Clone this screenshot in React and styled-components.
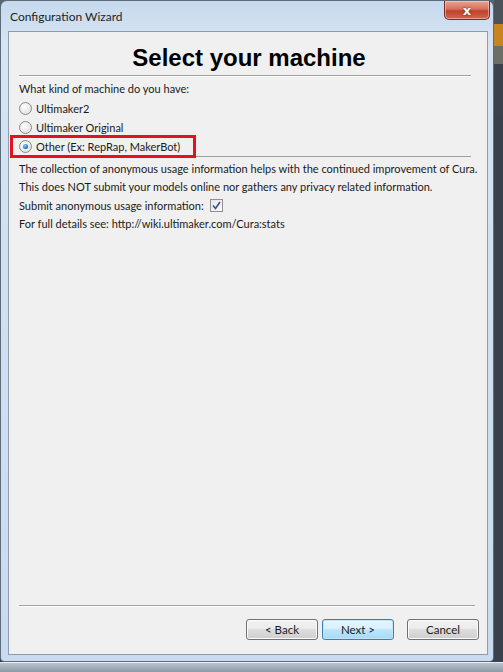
import React from 'react';
import styled, { createGlobalStyle } from 'styled-components';

const Global = createGlobalStyle`
	html, body {
		margin: 0;
		padding: 0;
		background: #3c4650;
	}
	body {
		width: 503px;
		height: 672px;
		overflow: hidden;
		font-family: Lato, 'Open Sans', sans-serif;
	}
`;

const Desktop = styled.div`
	width: 503px;
	height: 672px;
	display: flex;
	flex-direction: column;
	background: linear-gradient(to bottom, #5a6572 0%, #2f3740 100%);
`;

const Screen = styled.div`
	display: flex;
	height: 662px;
`;

const Window = styled.div`
	width: 494px;
	display: flex;
	flex-direction: column;
	background: linear-gradient(to bottom, #c6d9ee 0%, #d6e4f3 6%, #c9dbef 100%);
	border: 1px solid #5d6b7a;
	border-radius: 7px 7px 4px 4px;
	padding: 0 5px 6px 7px;
	box-sizing: border-box;
`;

const SideStrip = styled.div`
	flex: 1;
	display: flex;
	flex-direction: column;
	background: #39424c;
`;

const StripBlock = styled.div`
	height: ${(p) => p.h}px;
	background: ${(p) => p.c};
`;

const TaskBar = styled.div`
	flex: 1;
	background: linear-gradient(to bottom, #b7c3cf, #8d99a6);
	border-top: 1px solid #e8eef4;
`;

const TitleBar = styled.div`
	height: 30px;
	display: flex;
	align-items: flex-start;
	justify-content: space-between;
`;

const Title = styled.div`
	font-size: 12px;
	color: #1e1e1e;
	margin: 8px 0 0 2px;
`;

const CloseButton = styled.div`
	width: 44px;
	height: 18px;
	margin-right: -2px;
	display: flex;
	align-items: center;
	justify-content: center;
	border: 1px solid #7a2a22;
	border-top: none;
	border-radius: 0 0 5px 5px;
	background: linear-gradient(to bottom, #e8a493 0%, #d5705c 45%, #c0402c 55%, #d2674e 100%);
	box-shadow: inset 0 0 0 1px rgba(255, 220, 210, 0.5);
	color: #fff;
	font-family: 'DejaVu Sans', sans-serif;
	font-weight: bold;
	font-size: 13px;
	text-shadow: 0 0 2px #5a1a10;
`;

const Client = styled.div`
	flex: 1;
	display: flex;
	flex-direction: column;
	background: #f0f0f0;
	border: 1px solid #8e9cad;
	padding: 0 8px 0 10px;
`;

const Heading = styled.h1`
	margin: 0;
	padding: 12px 0 3px;
	text-align: center;
	font-family: 'Liberation Sans', Arial, sans-serif;
	font-weight: bold;
	font-size: 24px;
	color: #000;
`;

const Rule = styled.div`
	height: 1px;
	background: #a0a0a0;
	border-bottom: 1px solid #fff;
	margin-right: ${(p) => p.inset || 0}px;
`;

const Body = styled.div`
	flex: 1;
	display: flex;
	flex-direction: column;
	padding-top: 3px;
`;

const Paragraph = styled.div`
	display: flex;
	flex-direction: column;
	margin-top: 2px;
`;

const Line = styled.div`
	font-size: 11px;
	line-height: 18.5px;
	color: #1a1a1a;
	display: flex;
	align-items: center;
	white-space: nowrap;
`;

const RadioRow = styled.label`
	display: flex;
	align-items: center;
	gap: 4px;
	height: 19px;
	font-size: 11px;
	color: #1a1a1a;
`;

const RadioDot = styled.span`
	width: 11px;
	height: 11px;
	border-radius: 50%;
	border: 1px solid #8a8a8a;
	background: radial-gradient(circle at 40% 35%, #ffffff 0%, #e4e4e4 70%, #cfcfcf 100%);
	display: flex;
	align-items: center;
	justify-content: center;

	&::after {
		content: '';
		width: 5px;
		height: 5px;
		border-radius: 50%;
		display: ${(p) => (p.checked ? 'block' : 'none')};
		background: radial-gradient(circle at 40% 35%, #8fd6ff 0%, #1c78c9 60%, #0d4f8f 100%);
	}
`;

const Highlight = styled.div`
	display: flex;
	align-items: center;
	align-self: flex-start;
	margin-left: -9px;
	padding: 0 13px 0 6px;
	height: 17px;
	border: 3px solid #e01420;
`;

const OtherRow = styled.div`
	display: flex;
	align-items: flex-end;
	margin-top: -2px;
`;

const OtherRule = styled.div`
	flex: 1;
	height: 1px;
	background: #a0a0a0;
	margin-bottom: 1px;
	margin-right: 8px;
`;

const CheckBox = styled.span`
	width: 11px;
	height: 11px;
	margin-left: 6px;
	border: 1px solid #8f8f8f;
	background: linear-gradient(135deg, #e6e6e6, #fafafa);
	display: inline-flex;
	align-items: center;
	justify-content: center;
`;

const Footer = styled.div`
	display: flex;
	flex-direction: column;
	padding-bottom: 14px;
`;

const ButtonRow = styled.div`
	display: flex;
	justify-content: flex-end;
	align-items: center;
	padding-top: 12px;
`;

const Button = styled.button`
	width: 72px;
	height: 21px;
	margin-left: ${(p) => p.gap || 0}px;
	padding: 0;
	font-family: Lato, sans-serif;
	font-size: 11.5px;
	color: #1a1a1a;
	border-radius: 3px;
	border: 1px solid ${(p) => (p.primary ? '#3c7fb1' : '#707070')};
	background: ${(p) =>
		p.primary
			? 'linear-gradient(to bottom, #eaf6fd 0%, #d9f0fc 45%, #bee6fd 50%, #a7d9f5 100%)'
			: 'linear-gradient(to bottom, #f2f2f2 0%, #ebebeb 45%, #dddddd 50%, #cfcfcf 100%)'};
	box-shadow: inset 0 0 0 1px ${(p) => (p.primary ? '#c4e5f6' : '#fbfbfb')};
`;

const App = () => {
	return (
		<>
			<Global />
			<Desktop>
				<Screen>
					<Window>
						<TitleBar>
							<Title>Configuration Wizard</Title>
							<CloseButton>x</CloseButton>
						</TitleBar>
						<Client>
							<Heading>Select your machine</Heading>
							<Rule inset={8} />
							<Body>
								<Line>What kind of machine do you have:</Line>
								<RadioRow>
									<RadioDot />
									Ultimaker2
								</RadioRow>
								<RadioRow>
									<RadioDot />
									Ultimaker Original
								</RadioRow>
								<OtherRow>
									<Highlight>
										<RadioRow>
											<RadioDot checked />
											Other (Ex: RepRap, MakerBot)
										</RadioRow>
									</Highlight>
									<OtherRule />
								</OtherRow>
								<Paragraph>
									<Line>
										The collection of anonymous usage information helps with the continued
										improvement of Cura.
									</Line>
									<Line>
										This does NOT submit your models online nor gathers any privacy related
										information.
									</Line>
									<Line>
										Submit anonymous usage information:
										<CheckBox>
											<svg width="9" height="9" viewBox="0 0 9 9">
												<path
													d="M1 4.5 L3.5 7.5 L8 1"
													fill="none"
													stroke="#3d4f8a"
													strokeWidth="1.6"
												/>
											</svg>
										</CheckBox>
									</Line>
									<Line>For full details see: http://wiki.ultimaker.com/Cura:stats</Line>
								</Paragraph>
							</Body>
							<Footer>
								<Rule inset={4} />
								<ButtonRow>
									<Button>&lt; Back</Button>
									<Button primary gap={4}>
										Next &gt;
									</Button>
									<Button gap={13}>Cancel</Button>
								</ButtonRow>
							</Footer>
						</Client>
					</Window>
					<SideStrip>
						<StripBlock h={24} c="#4a525a" />
						<StripBlock h={22} c="#c8841e" />
						<StripBlock h={18} c="#6b6f66" />
						<StripBlock h={50} c="#3a434d" />
					</SideStrip>
				</Screen>
				<TaskBar />
			</Desktop>
		</>
	);
};

export default App;
